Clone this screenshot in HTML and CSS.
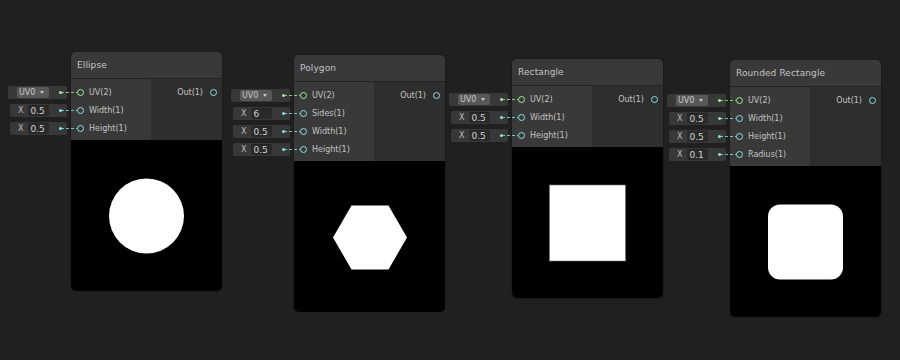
FILE: index.html
```html
<!DOCTYPE html>
<html lang="en">
<head>
    <meta charset="UTF-8">
    <title>Shader Graph - shape nodes</title>
    <link rel="stylesheet" href="styles.css">
</head>
<body>

<div class="graph">

    <!-- Ellipse -->
    <div class="node node-ellipse">
        <div class="node-title">Ellipse</div>
        <div class="node-ports">
            <div class="inputs">
                <div class="port">
                    <div class="attach attach-uv"><span class="dropdown">UV0<b class="caret"></b></span><i class="link-dot uv"></i></div>
                    <i class="wire uv"></i><i class="socket uv"></i><span>UV(2)</span>
                </div>
                <div class="port">
                    <div class="attach"><span class="axis">X</span><span class="field">0.5</span><i class="link-dot"></i></div>
                    <i class="wire"></i><i class="socket"></i><span>Width(1)</span>
                </div>
                <div class="port">
                    <div class="attach"><span class="axis">X</span><span class="field">0.5</span><i class="link-dot"></i></div>
                    <i class="wire"></i><i class="socket"></i><span>Height(1)</span>
                </div>
            </div>
            <div class="outputs">
                <div class="port port-out"><span>Out(1)</span><i class="socket"></i></div>
            </div>
        </div>
        <div class="preview">
            <svg viewBox="0 0 151 151" width="151" height="151"><circle cx="75.5" cy="76" r="37.5" fill="#fff"/></svg>
        </div>
    </div>

    <!-- Polygon -->
    <div class="node node-polygon">
        <div class="node-title">Polygon</div>
        <div class="node-ports">
            <div class="inputs">
                <div class="port">
                    <div class="attach attach-uv"><span class="dropdown">UV0<b class="caret"></b></span><i class="link-dot uv"></i></div>
                    <i class="wire uv"></i><i class="socket uv"></i><span>UV(2)</span>
                </div>
                <div class="port">
                    <div class="attach"><span class="axis">X</span><span class="field">6</span><i class="link-dot"></i></div>
                    <i class="wire"></i><i class="socket"></i><span>Sides(1)</span>
                </div>
                <div class="port">
                    <div class="attach"><span class="axis">X</span><span class="field">0.5</span><i class="link-dot"></i></div>
                    <i class="wire"></i><i class="socket"></i><span>Width(1)</span>
                </div>
                <div class="port">
                    <div class="attach"><span class="axis">X</span><span class="field">0.5</span><i class="link-dot"></i></div>
                    <i class="wire"></i><i class="socket"></i><span>Height(1)</span>
                </div>
            </div>
            <div class="outputs">
                <div class="port port-out"><span>Out(1)</span><i class="socket"></i></div>
            </div>
        </div>
        <div class="preview">
            <svg viewBox="0 0 151 151" width="151" height="151"><polygon points="39,76.5 57.5,44.5 94.5,44.5 113,76.5 94.5,108.5 57.5,108.5" fill="#fff"/></svg>
        </div>
    </div>

    <!-- Rectangle -->
    <div class="node node-rectangle">
        <div class="node-title">Rectangle</div>
        <div class="node-ports">
            <div class="inputs">
                <div class="port">
                    <div class="attach attach-uv"><span class="dropdown">UV0<b class="caret"></b></span><i class="link-dot uv"></i></div>
                    <i class="wire uv"></i><i class="socket uv"></i><span>UV(2)</span>
                </div>
                <div class="port">
                    <div class="attach"><span class="axis">X</span><span class="field">0.5</span><i class="link-dot"></i></div>
                    <i class="wire"></i><i class="socket"></i><span>Width(1)</span>
                </div>
                <div class="port">
                    <div class="attach"><span class="axis">X</span><span class="field">0.5</span><i class="link-dot"></i></div>
                    <i class="wire"></i><i class="socket"></i><span>Height(1)</span>
                </div>
            </div>
            <div class="outputs">
                <div class="port port-out"><span>Out(1)</span><i class="socket"></i></div>
            </div>
        </div>
        <div class="preview">
            <svg viewBox="0 0 151 151" width="151" height="151"><rect x="37.5" y="38" width="76" height="76" fill="#fff" stroke="#777" stroke-width="0.6"/></svg>
        </div>
    </div>

    <!-- Rounded Rectangle -->
    <div class="node node-rounded">
        <div class="node-title">Rounded Rectangle</div>
        <div class="node-ports">
            <div class="inputs">
                <div class="port">
                    <div class="attach attach-uv"><span class="dropdown">UV0<b class="caret"></b></span><i class="link-dot uv"></i></div>
                    <i class="wire uv"></i><i class="socket uv"></i><span>UV(2)</span>
                </div>
                <div class="port">
                    <div class="attach"><span class="axis">X</span><span class="field">0.5</span><i class="link-dot"></i></div>
                    <i class="wire"></i><i class="socket"></i><span>Width(1)</span>
                </div>
                <div class="port">
                    <div class="attach"><span class="axis">X</span><span class="field">0.5</span><i class="link-dot"></i></div>
                    <i class="wire"></i><i class="socket"></i><span>Height(1)</span>
                </div>
                <div class="port">
                    <div class="attach"><span class="axis">X</span><span class="field">0.1</span><i class="link-dot"></i></div>
                    <i class="wire"></i><i class="socket"></i><span>Radius(1)</span>
                </div>
            </div>
            <div class="outputs">
                <div class="port port-out"><span>Out(1)</span><i class="socket"></i></div>
            </div>
        </div>
        <div class="preview">
            <svg viewBox="0 0 151 151" width="151" height="151"><rect x="38" y="38.5" width="75" height="75" rx="12" fill="#fff"/></svg>
        </div>
    </div>

</div>

</body>
</html>
```

FILE: styles.css
```css
body {
    margin: 0;
    background-color: #202020;
    font-family: "DejaVu Sans", Verdana, sans-serif;
    color: #c4c4c4;
}

.graph {
    position: relative;
    width: 900px;
    height: 360px;
}

/* nodes sit on a free canvas */
.node {
    position: absolute;
    width: 151px;
    border-radius: 5px;
    background-color: #2e2e2e;
    box-shadow: 0 0 0 1px #1b1b1b;
}

.node-ellipse   { left: 71px;  top: 52px; }
.node-polygon   { left: 294px; top: 55px; }
.node-rectangle { left: 512px; top: 59px; }
.node-rounded   { left: 730px; top: 60px; }

.node-title {
    height: 26px;
    line-height: 27px;
    padding-left: 6px;
    font-size: 9px;
    letter-spacing: 0.1px;
    background-color: #393939;
    border-bottom: 1px solid #232323;
    border-radius: 5px 5px 0 0;
}

.node-ports {
    display: flex;
}

.inputs {
    width: 80px;
    padding: 4px 0 3px;
    background-color: #393939;
}

.outputs {
    flex: 1;
    padding: 4px 0 3px;
    background-color: #2e2e2e;
}

.port {
    position: relative;
    height: 18px;
    display: flex;
    align-items: center;
    padding-left: 6px;
    font-size: 8px;
    white-space: nowrap;
}

.port-out {
    justify-content: flex-end;
    padding-left: 0;
    padding-right: 5px;
}

.socket {
    width: 7px;
    height: 7px;
    box-sizing: border-box;
    border: 1.5px solid #84e4e7;
    border-radius: 50%;
    margin-right: 5px;
}

.port-out .socket {
    margin-right: 0;
    margin-left: 7px;
}

.socket.uv {
    border-color: #9aef92;
}

/* dashed edge between the attached field and the socket */
.wire {
    position: absolute;
    left: -10px;
    top: 9px;
    width: 16px;
    height: 1px;
    background: repeating-linear-gradient(to right, #84e4e7 0 3px, transparent 3px 5px);
    opacity: 0.8;
}

.wire.uv {
    background: repeating-linear-gradient(to right, #9aef92 0 3px, transparent 3px 5px);
}

/* inline value boxes left of the node */
.attach {
    position: absolute;
    right: calc(100% + 4px);
    top: 2.5px;
    width: 57px;
    height: 13px;
    box-sizing: border-box;
    display: flex;
    align-items: center;
    padding-left: 8px;
    background-color: #383838;
    border-radius: 2px;
}

.attach-uv {
    width: 59px;
    padding-left: 9px;
}

.link-dot {
    width: 3px;
    height: 3px;
    margin-left: auto;
    margin-right: 5px;
    border-radius: 50%;
    background-color: #84e4e7;
}

.link-dot.uv {
    background-color: #9aef92;
}

.dropdown {
    display: flex;
    align-items: center;
    width: 32px;
    height: 11px;
    box-sizing: border-box;
    padding-left: 2px;
    font-size: 8px;
    line-height: 11px;
    color: #c8c8c8;
    background-color: #585858;
    border-radius: 2px;
}

.caret {
    width: 0;
    height: 0;
    margin-left: 5px;
    border-left: 2.5px solid transparent;
    border-right: 2.5px solid transparent;
    border-top: 3px solid #c8c8c8;
}

.axis {
    font-size: 8px;
    margin-right: 5px;
    color: #bdbdbd;
}

.field {
    width: 21px;
    height: 11px;
    box-sizing: border-box;
    padding-left: 2px;
    font-size: 9px;
    line-height: 11px;
    color: #d2d2d2;
    background-color: #2a2a2a;
    border-top: 1px solid #222;
    border-radius: 2px;
}

.preview {
    height: 151px;
    background-color: #000;
    border-radius: 0 0 5px 5px;
    overflow: hidden;
}

.preview svg {
    display: block;
}
```
